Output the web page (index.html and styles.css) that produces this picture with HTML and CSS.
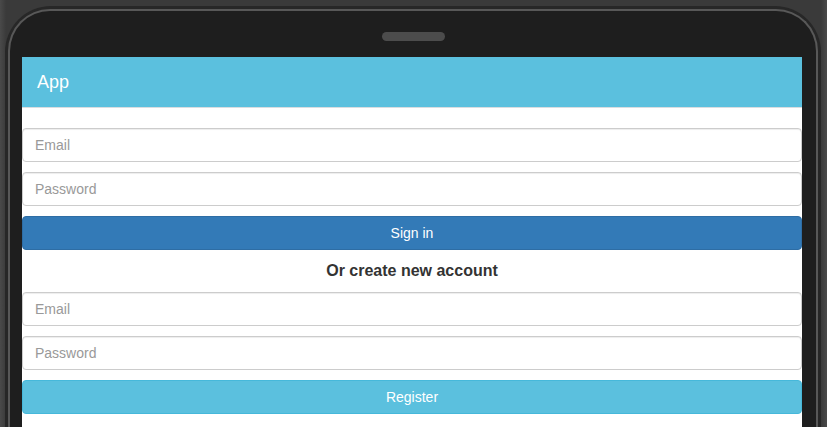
FILE: index.html
```html
<!DOCTYPE html>
<html>
<head>
<meta charset="utf-8">
<link rel="stylesheet" href="styles.css">
</head>
<body>
<div class="device">
  <div class="bezel">
    <div class="speaker"></div>
    <div class="screen">
      <div class="navbar">App</div>
      <div class="content">
        <input class="field" type="text" placeholder="Email">
        <input class="field" type="password" placeholder="Password">
        <button class="btn btn-primary">Sign in</button>
        <div class="subtitle">Or create new account</div>
        <input class="field" type="text" placeholder="Email">
        <input class="field" type="password" placeholder="Password">
        <button class="btn btn-info">Register</button>
      </div>
    </div>
  </div>
</div>
</body>
</html>
```
FILE: styles.css
```css
html, body {
  margin: 0;
  padding: 0;
  height: 100%;
  overflow: hidden;
}
body {
  background: linear-gradient(90deg, #4a4a4a 0px, #3a3a3a 6px, #3a3a3a 821px, #4a4a4a 827px);
  font-family: "Liberation Sans", Arial, sans-serif;
}
.device {
  margin: 6px 0 0 5px;
  width: 816px;
  height: 440px;
  box-sizing: border-box;
  background: #272727;
  border-radius: 46px 46px 0 0;
  padding: 3px 3px 0;
}
.bezel {
  height: 100%;
  box-sizing: border-box;
  border: 2px solid #585858;
  border-bottom: none;
  border-radius: 42px 42px 0 0;
  background: #1e1e1e;
  padding: 0 14px 0 12px;
  display: flex;
  flex-direction: column;
}
.speaker {
  width: 63px;
  height: 9px;
  border-radius: 5px;
  background: #4c4c4c;
  margin: 21px auto 16px;
  position: relative;
  left: 1px;
}
.screen {
  background: #fff;
  flex: 1;
}
.navbar {
  height: 51px;
  box-sizing: border-box;
  background: #5bc0de;
  border-bottom: 1px solid #d9dde0;
  color: #fff;
  font-size: 18px;
  padding: 1px 0 0 15px;
  display: flex;
  align-items: center;
}
.content {
  padding-top: 20px;
  display: flex;
  flex-direction: column;
  gap: 10px;
}
.field {
  height: 34px;
  box-sizing: border-box;
  border: 1px solid #ccc;
  border-radius: 4px;
  padding: 6px 12px;
  font-family: "Liberation Sans", Arial, sans-serif;
  font-size: 14px;
  color: #555;
  background: #fff;
  box-shadow: inset 0 1px 1px rgba(0,0,0,.075);
  outline: none;
  margin: 0;
  width: 100%;
}
.field::placeholder {
  color: #999;
}
.btn {
  height: 34px;
  box-sizing: border-box;
  border-radius: 4px;
  font-family: "Liberation Sans", Arial, sans-serif;
  font-size: 14px;
  color: #fff;
  margin: 0;
  width: 100%;
  padding: 6px 12px;
}
.btn-primary {
  background: #337ab7;
  border: 1px solid #2e6da4;
}
.btn-info {
  background: #5bc0de;
  border: 1px solid #46b8da;
}
.subtitle {
  height: 22px;
  display: flex;
  align-items: center;
  justify-content: center;
  font-size: 16px;
  font-weight: bold;
  color: #333;
}
```
